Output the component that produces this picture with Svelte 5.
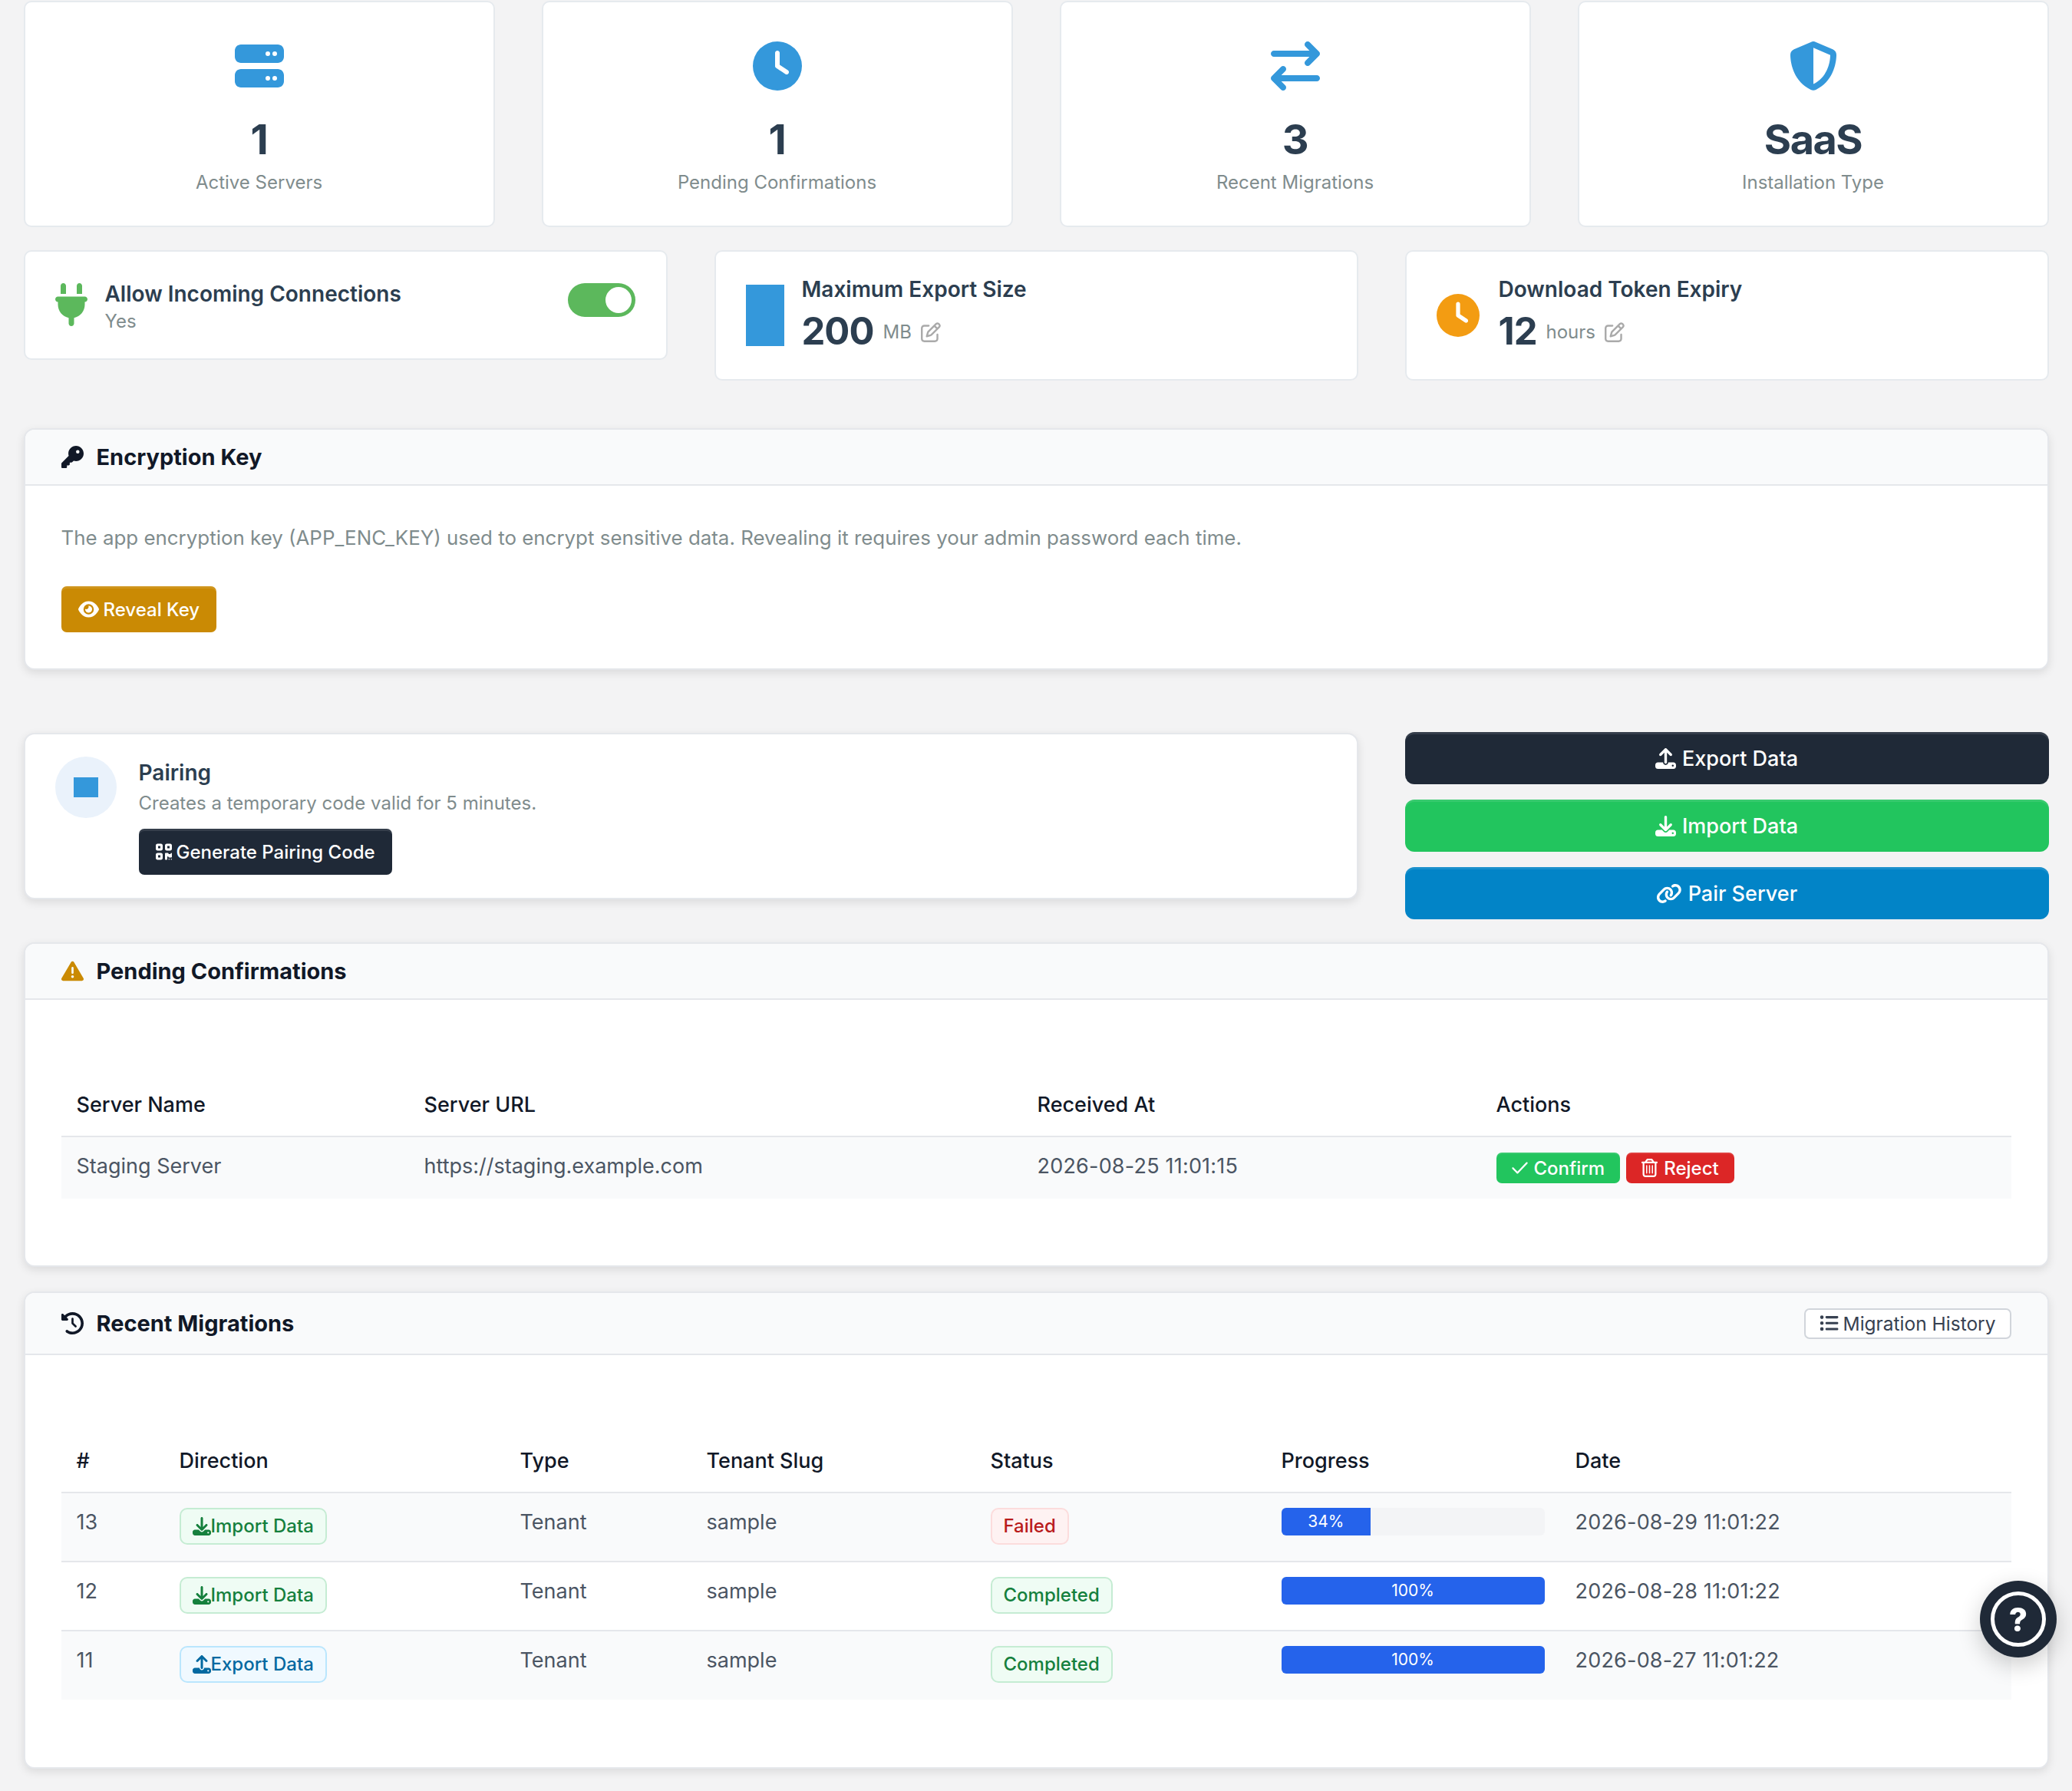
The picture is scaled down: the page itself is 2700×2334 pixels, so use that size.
<script lang="ts">
	const icons = {
		server: ['0 0 512 512', 'M64 32C28.7 32 0 60.7 0 96v64c0 35.3 28.7 64 64 64H448c35.3 0 64-28.7 64-64V96c0-35.3-28.7-64-64-64H64zm280 72a24 24 0 1 1 0 48 24 24 0 1 1 0-48zm48 24a24 24 0 1 1 48 0 24 24 0 1 1 -48 0zM64 288c-35.3 0-64 28.7-64 64v64c0 35.3 28.7 64 64 64H448c35.3 0 64-28.7 64-64V352c0-35.3-28.7-64-64-64H64zm280 72a24 24 0 1 1 0 48 24 24 0 1 1 0-48zm48 24a24 24 0 1 1 48 0 24 24 0 1 1 -48 0z'],
		clock: ['0 0 512 512', 'M256 0a256 256 0 1 1 0 512A256 256 0 1 1 256 0zM232 120V256c0 8 4 15.5 10.7 20l96 64c11 7.4 25.9 4.4 33.3-6.7s4.4-25.9-6.7-33.3L280 243.2V120c0-13.3-10.7-24-24-24s-24 10.7-24 24z'],
		exchange: ['0 0 512 512', 'M502.6 150.6c12.5-12.5 12.5-32.8 0-45.3l-96-96c-12.5-12.5-32.8-12.5-45.3 0s-12.5 32.8 0 45.3L402.7 96 32 96C14.3 96 0 110.3 0 128s14.3 32 32 32l370.7 0-41.4 41.4c-12.5 12.5-12.5 32.8 0 45.3s32.8 12.5 45.3 0l96-96zM105.4 502.6c12.5 12.5 32.8 12.5 45.3 0s12.5-32.8 0-45.3L109.3 416 480 416c17.7 0 32-14.3 32-32s-14.3-32-32-32l-370.7 0 41.4-41.4c12.5-12.5 12.5-32.8 0-45.3s-32.8-12.5-45.3 0l-96 96c-12.5 12.5-12.5 32.8 0 45.3l96 96z'],
		shield: ['0 0 512 512', 'M256 0c4.6 0 9.2 1 13.4 2.9L457.7 82.8c22 9.3 38.4 31 38.3 57.2c-.5 99.2-41.3 280.7-213.6 363.2c-16.7 8-36.1 8-52.8 0C57.3 420.7 16.5 239.2 16 140c-.1-26.2 16.3-47.9 38.3-57.2L242.7 2.9C246.8 1 251.4 0 256 0zm0 66.8V444.8C394 378 431.1 230.1 432 141.4L256 66.8l0 0z'],
		plug: ['0 0 384 512', 'M96 0C78.3 0 64 14.3 64 32v96h64V32c0-17.7-14.3-32-32-32zM288 0c-17.7 0-32 14.3-32 32v96h64V32c0-17.7-14.3-32-32-32zM32 160c-17.7 0-32 14.3-32 32s14.3 32 32 32v32c0 77.4 55 142 128 156.8V480c0 17.7 14.3 32 32 32s32-14.3 32-32V412.8C297 398 352 333.4 352 256V224c17.7 0 32-14.3 32-32s-14.3-32-32-32H32z'],
		edit: ['0 0 512 512', 'M441 58.9L453.1 71c9.4 9.4 9.4 24.6 0 33.9L424 134.1 377.9 88 407 58.9c9.4-9.4 24.6-9.4 33.9 0zM209.8 256.2L344 121.9 390.1 168 255.8 302.2c-2.9 2.9-6.5 5-10.4 6.1l-58.5 16.7 16.7-58.5c1.1-3.9 3.2-7.5 6.1-10.4zM373.1 25L175.8 222.2c-8.7 8.7-15 19.4-18.3 31.1l-28.6 100c-2.4 8.4-.1 17.4 6.1 23.6s15.2 8.5 23.6 6.1l100-28.6c11.8-3.4 22.5-9.7 31.1-18.3L487 138.9c28.1-28.1 28.1-73.7 0-101.8L474.9 25C446.8-3.1 401.2-3.1 373.1 25zM88 64C39.4 64 0 103.4 0 152V424c0 48.6 39.4 88 88 88H360c48.6 0 88-39.4 88-88V312c0-13.3-10.7-24-24-24s-24 10.7-24 24V424c0 22.1-17.9 40-40 40H88c-22.1 0-40-17.9-40-40V152c0-22.1 17.9-40 40-40H200c13.3 0 24-10.7 24-24s-10.7-24-24-24H88z'],
		key: ['0 0 512 512', 'M336 352c97.2 0 176-78.8 176-176S433.2 0 336 0S160 78.8 160 176c0 18.7 2.9 36.8 8.3 53.7L7 391c-4.5 4.5-7 10.6-7 17v80c0 13.3 10.7 24 24 24h80c13.3 0 24-10.7 24-24V448h40c13.3 0 24-10.7 24-24V384h40c6.4 0 12.5-2.5 17-7l33.3-33.3c16.9 5.4 35 8.3 53.7 8.3zM376 96a40 40 0 1 1 0 80 40 40 0 1 1 0-80z'],
		warning: ['0 0 512 512', 'M256 32c14.2 0 27.3 7.5 34.5 19.8l216 368c7.3 12.4 7.3 27.7 .2 40.1S486.3 480 472 480H40c-14.3 0-27.6-7.7-34.7-20.1s-7-27.8 .2-40.1l216-368C228.7 39.5 241.8 32 256 32zm0 128c-13.3 0-24 10.7-24 24V296c0 13.3 10.7 24 24 24s24-10.7 24-24V184c0-13.3-10.7-24-24-24zm32 224a32 32 0 1 0 -64 0 32 32 0 1 0 64 0z'],
		history: ['0 0 512 512', 'M75 75L41 41C25.9 25.9 0 36.6 0 57.9V168c0 13.3 10.7 24 24 24H134.1c21.4 0 32.1-25.9 17-41l-30.8-30.8C155 85.5 203 64 256 64c106 0 192 86 192 192s-86 192-192 192c-40.8 0-78.6-12.7-109.7-34.4c-14.5-10.1-34.4-6.6-44.6 7.9s-6.6 34.4 7.9 44.6C151.2 495 201.7 512 256 512c141.4 0 256-114.6 256-256S397.4 0 256 0C185.3 0 121.3 28.7 75 75zm181 53c-13.3 0-24 10.7-24 24V256c0 6.4 2.5 12.5 7 17l72 72c9.4 9.4 24.6 9.4 33.9 0s9.4-24.6 0-33.9l-65-65V152c0-13.3-10.7-24-24-24z'],
		eye: ['0 0 576 512', 'M288 32c-80.8 0-145.5 36.8-192.6 80.6C48.6 156 17.3 208 2.5 243.7c-3.3 7.9-3.3 16.7 0 24.6C17.3 304 48.6 356 95.4 399.4C142.5 443.2 207.2 480 288 480s145.5-36.8 192.6-80.6c46.8-43.5 78.1-95.4 93-131.1c3.3-7.9 3.3-16.7 0-24.6c-14.9-35.7-46.2-87.7-93-131.1C433.5 68.8 368.8 32 288 32zM144 256a144 144 0 1 1 288 0 144 144 0 1 1 -288 0zm144-64c0 35.3-28.7 64-64 64c-7.1 0-13.9-1.2-20.3-3.3c-5.5-1.8-11.9 1.6-11.7 7.4c.3 6.9 1.3 13.8 3.2 20.7c13.7 51.2 66.4 81.6 117.6 67.9s81.6-66.4 67.9-117.6c-11.1-41.5-47.8-69.4-88.6-71.1c-5.8-.2-9.2 6.1-7.4 11.7c2.1 6.4 3.3 13.2 3.3 20.3z'],
		qr: ['0 0 448 512', 'M0 80C0 53.5 21.5 32 48 32h96c26.5 0 48 21.5 48 48v96c0 26.5-21.5 48-48 48H48c-26.5 0-48-21.5-48-48V80zM64 96v64h64V96H64zM0 336c0-26.5 21.5-48 48-48h96c26.5 0 48 21.5 48 48v96c0 26.5-21.5 48-48 48H48c-26.5 0-48-21.5-48-48V336zm64 16v64h64V352H64zM304 32h96c26.5 0 48 21.5 48 48v96c0 26.5-21.5 48-48 48H304c-26.5 0-48-21.5-48-48V80c0-26.5 21.5-48 48-48zm80 64H320v64h64V96zM256 304c0-8.8 7.2-16 16-16h64c8.8 0 16 7.2 16 16s7.2 16 16 16h32c8.8 0 16-7.2 16-16s7.2-16 16-16s16 7.2 16 16v96c0 8.8-7.2 16-16 16H368c-8.8 0-16-7.2-16-16s-7.2-16-16-16s-16 7.2-16 16v64c0 8.8-7.2 16-16 16H272c-8.8 0-16-7.2-16-16V304zM368 480a16 16 0 1 1 0-32 16 16 0 1 1 0 32zm64 0a16 16 0 1 1 0-32 16 16 0 1 1 0 32z'],
		upload: ['0 0 512 512', 'M288 109.3V352c0 17.7-14.3 32-32 32s-32-14.3-32-32V109.3l-73.4 73.4c-12.5 12.5-32.8 12.5-45.3 0s-12.5-32.8 0-45.3l128-128c12.5-12.5 32.8-12.5 45.3 0l128 128c12.5 12.5 12.5 32.8 0 45.3s-32.8 12.5-45.3 0L288 109.3zM64 352H192c0 35.3 28.7 64 64 64s64-28.7 64-64H448c35.3 0 64 28.7 64 64v32c0 35.3-28.7 64-64 64H64c-35.3 0-64-28.7-64-64V416c0-35.3 28.7-64 64-64zM432 456a24 24 0 1 0 0-48 24 24 0 1 0 0 48z'],
		download: ['0 0 512 512', 'M288 32c0-17.7-14.3-32-32-32s-32 14.3-32 32V274.7l-73.4-73.4c-12.5-12.5-32.8-12.5-45.3 0s-12.5 32.8 0 45.3l128 128c12.5 12.5 32.8 12.5 45.3 0l128-128c12.5-12.5 12.5-32.8 0-45.3s-32.8-12.5-45.3 0L288 274.7V32zM64 352c-35.3 0-64 28.7-64 64v32c0 35.3 28.7 64 64 64H448c35.3 0 64-28.7 64-64V416c0-35.3-28.7-64-64-64H346.5l-45.3 45.3c-25 25-65.5 25-90.5 0L165.5 352H64zm368 56a24 24 0 1 1 0 48 24 24 0 1 1 0-48z'],
		link: ['0 0 640 512', 'M579.8 267.7c56.5-56.5 56.5-148 0-204.5c-50-50-128.8-56.5-186.3-15.4l-1.6 1.1c-14.4 10.3-17.7 30.3-7.4 44.6s30.3 17.7 44.6 7.4l1.6-1.1c32.1-22.9 76-19.3 103.8 8.6c31.5 31.5 31.5 82.5 0 114L422.3 334.8c-31.5 31.5-82.5 31.5-114 0c-27.9-27.9-31.5-71.8-8.6-103.8l1.1-1.6c10.3-14.4 6.9-34.4-7.4-44.6s-34.4-6.9-44.6 7.4l-1.1 1.6C206.5 251.2 213 330 263 380c56.5 56.5 148 56.5 204.5 0L579.8 267.7zM60.2 244.3c-56.5 56.5-56.5 148 0 204.5c50 50 128.8 56.5 186.3 15.4l1.6-1.1c14.4-10.3 17.7-30.3 7.4-44.6s-30.3-17.7-44.6-7.4l-1.6 1.1c-32.1 22.9-76 19.3-103.8-8.6C74 372 74 321 105.5 289.5L217.7 177.2c31.5-31.5 82.5-31.5 114 0c27.9 27.9 31.5 71.8 8.6 103.9l-1.1 1.6c-10.3 14.4-6.9 34.4 7.4 44.6s34.4 6.9 44.6-7.4l1.1-1.6C433.5 260.8 427 182 377 132c-56.5-56.5-148-56.5-204.5 0L60.2 244.3z'],
		trash: ['0 0 448 512', 'M170.5 51.6L151.5 80h145l-19-28.4c-1.5-2.2-4-3.6-6.7-3.6H177.1c-2.7 0-5.2 1.3-6.7 3.6zm147-26.6L354.2 80H368h48 8c13.3 0 24 10.7 24 24s-10.7 24-24 24h-8V432c0 44.2-35.8 80-80 80H112c-44.2 0-80-35.8-80-80V128H24c-13.3 0-24-10.7-24-24S10.7 80 24 80h8H80 93.8l36.7-55.1C140.9 9.4 158.4 0 177.1 0h93.7c18.7 0 36.2 9.4 46.6 24.9zM80 128V432c0 17.7 14.3 32 32 32H336c17.7 0 32-14.3 32-32V128H80zm80 64V400c0 8.8-7.2 16-16 16s-16-7.2-16-16V192c0-8.8 7.2-16 16-16s16 7.2 16 16zm80 0V400c0 8.8-7.2 16-16 16s-16-7.2-16-16V192c0-8.8 7.2-16 16-16s16 7.2 16 16zm80 0V400c0 8.8-7.2 16-16 16s-16-7.2-16-16V192c0-8.8 7.2-16 16-16s16 7.2 16 16z'],
		check: ['0 0 448 512', 'M434 103c9 9 9 24 0 33L174 410c-9 10-25 10-34 0L14 280c-9-9-9-24 0-33s24-9 33 0l110 112L401 103c9-9 24-9 33 0z'],
		list: ['0 0 512 512', 'M64 144a48 48 0 1 0 0-96 48 48 0 1 0 0 96zM192 64c-17.7 0-32 14.3-32 32s14.3 32 32 32H480c17.7 0 32-14.3 32-32s-14.3-32-32-32H192zm0 160c-17.7 0-32 14.3-32 32s14.3 32 32 32H480c17.7 0 32-14.3 32-32s-14.3-32-32-32H192zm0 160c-17.7 0-32 14.3-32 32s14.3 32 32 32H480c17.7 0 32-14.3 32-32s-14.3-32-32-32H192zM64 464a48 48 0 1 0 0-96 48 48 0 1 0 0 96zm48-208a48 48 0 1 0 -96 0 48 48 0 1 0 96 0z']
	};

	const stats = [
		{ icon: 'server', value: '1', label: 'Active Servers' },
		{ icon: 'clock', value: '1', label: 'Pending Confirmations' },
		{ icon: 'exchange', value: '3', label: 'Recent Migrations' },
		{ icon: 'shield', value: 'SaaS', label: 'Installation Type' }
	];

	const migrations = [
		{ id: 13, dir: 'import', status: 'Failed', progress: 34, date: '2026-08-29 11:01:22' },
		{ id: 12, dir: 'import', status: 'Completed', progress: 100, date: '2026-08-28 11:01:22' },
		{ id: 11, dir: 'export', status: 'Completed', progress: 100, date: '2026-08-27 11:01:22' }
	];
</script>

{#snippet icon(name)}
	<svg class="ico" viewBox={icons[name][0]} fill="currentColor" aria-hidden="true"><path d={icons[name][1]} /></svg>
{/snippet}

<div class="page">
	<section class="stats">
		{#each stats as stat}
			<div class="stat-card">
				<div class="stat-icon">{@render icon(stat.icon)}</div>
				<div class="stat-value">{stat.value}</div>
				<div class="stat-label">{stat.label}</div>
			</div>
		{/each}
	</section>

	<section class="settings">
		<div class="setting-card toggle-card">
			<div class="plug">{@render icon('plug')}</div>
			<div class="toggle-copy">
				<div class="setting-title">Allow Incoming Connections</div>
				<div class="setting-sub">Yes</div>
			</div>
			<div class="toggle"><span class="knob"></span></div>
		</div>
		<div class="setting-card">
			<div class="blue-block"></div>
			<div>
				<div class="setting-title">Maximum Export Size</div>
				<div class="setting-value">200 <span class="unit">MB</span><span class="edit">{@render icon('edit')}</span></div>
			</div>
		</div>
		<div class="setting-card">
			<div class="orange-clock">{@render icon('clock')}</div>
			<div>
				<div class="setting-title">Download Token Expiry</div>
				<div class="setting-value">12 <span class="unit">hours</span><span class="edit">{@render icon('edit')}</span></div>
			</div>
		</div>
	</section>

	<section class="panel key-panel">
		<header class="panel-head">
			<h2>{@render icon('key')}Encryption Key</h2>
		</header>
		<div class="key-body">
			<p>The app encryption key (APP_ENC_KEY) used to encrypt sensitive data. Revealing it requires your admin password each time.</p>
			<button class="btn amber">{@render icon('eye')}Reveal Key</button>
		</div>
	</section>

	<section class="pair-row">
		<div class="pair-card">
			<div class="pair-circle"><span class="pair-square"></span></div>
			<div>
				<div class="pair-title">Pairing</div>
				<div class="pair-sub">Creates a temporary code valid for 5 minutes.</div>
				<button class="btn dark">{@render icon('qr')}Generate Pairing Code</button>
			</div>
		</div>
		<div class="action-stack">
			<button class="wide dark">{@render icon('upload')}Export Data</button>
			<button class="wide green">{@render icon('download')}Import Data</button>
			<button class="wide blue">{@render icon('link')}Pair Server</button>
		</div>
	</section>

	<section class="panel pending-panel">
		<header class="panel-head">
			<h2><span class="warn">{@render icon('warning')}</span>Pending Confirmations</h2>
		</header>
		<div class="table-wrap">
			<table class="pending">
				<thead>
					<tr><th>Server Name</th><th>Server URL</th><th>Received At</th><th>Actions</th></tr>
				</thead>
				<tbody>
					<tr>
						<td>Staging Server</td>
						<td>https://staging.example.com</td>
						<td class="date">2026-08-25 11:01:15</td>
						<td>
							<div class="row-actions">
								<button class="mini green">{@render icon('check')}Confirm</button>
								<button class="mini red">{@render icon('trash')}Reject</button>
							</div>
						</td>
					</tr>
				</tbody>
			</table>
		</div>
	</section>

	<section class="panel recent-panel">
		<header class="panel-head">
			<h2>{@render icon('history')}Recent Migrations</h2>
			<button class="outline">{@render icon('list')}Migration History</button>
		</header>
		<div class="table-wrap">
			<table class="recent">
				<thead>
					<tr><th>#</th><th>Direction</th><th>Type</th><th>Tenant Slug</th><th>Status</th><th>Progress</th><th>Date</th></tr>
				</thead>
				<tbody>
					{#each migrations as row}
						<tr>
							<td>{row.id}</td>
							<td>
								{#if row.dir === 'import'}
									<span class="badge ok">{@render icon('download')}Import Data</span>
								{:else}
									<span class="badge info">{@render icon('upload')}Export Data</span>
								{/if}
							</td>
							<td>Tenant</td>
							<td>sample</td>
							<td><span class="badge" class:ok={row.status === 'Completed'} class:bad={row.status === 'Failed'}>{row.status}</span></td>
							<td>
								<div class="bar"><div class="fill" style="width: {row.progress}%">{row.progress}%</div></div>
							</td>
							<td class="date">{row.date}</td>
						</tr>
					{/each}
				</tbody>
			</table>
		</div>
	</section>
</div>

<button class="help" aria-label="Help"><span class="help-ring">?</span></button>

<style>
	:global(body) {
		background: #f3f3f4;
	}

	.page {
		padding: 1px 30.5px 30px;
		font-family: Inter, 'Noto Sans', sans-serif;
		font-size: 27px;
		color: #4b5563;
	}

	.ico {
		display: block;
		height: 1em;
		width: auto;
		flex: none;
	}

	button {
		font-family: inherit;
		border: 0;
		color: #fff;
	}

	.stats {
		display: grid;
		grid-template-columns: repeat(4, 1fr);
		gap: 61px;
	}

	.stat-card {
		background: #fff;
		border: 2px solid #e6eaee;
		border-radius: 10px;
		padding: 51px 30px 38px;
		text-align: center;
	}

	.stat-icon {
		display: flex;
		justify-content: center;
		font-size: 64px;
		color: #3498db;
	}

	.stat-value {
		margin-top: 32px;
		font-size: 54px;
		font-weight: 700;
		line-height: 63px;
		letter-spacing: -1.5px;
		color: #2c3e50;
	}

	.stat-label {
		margin-top: 6px;
		font-size: 24px;
		line-height: 37px;
		color: #7f8c8d;
	}

	.settings {
		display: grid;
		grid-template-columns: repeat(3, 1fr);
		align-items: start;
		gap: 61px;
		margin-top: 30px;
	}

	.setting-card {
		display: flex;
		align-items: center;
		gap: 23px;
		height: 170px;
		box-sizing: border-box;
		padding: 0 39px;
		background: #fff;
		border: 2px solid #e6eaee;
		border-radius: 10px;
	}

	.toggle-card {
		align-items: flex-start;
		height: 143px;
		padding: 41px 40px 0 39px;
	}

	.plug {
		font-size: 56px;
		color: #5cb85c;
	}

	.toggle-copy {
		flex: 1;
	}

	.setting-title {
		font-size: 28px;
		font-weight: 600;
		line-height: 34px;
		color: #2c3e50;
	}

	.toggle-copy .setting-title {
		margin-top: -3px;
	}

	.setting-sub {
		margin-top: 4px;
		font-size: 24px;
		line-height: 30px;
		color: #7f8c8d;
	}

	.toggle {
		display: flex;
		justify-content: flex-end;
		align-items: center;
		width: 88px;
		height: 44px;
		box-sizing: border-box;
		padding: 0 5px;
		border-radius: 22px;
		background: #5cb85c;
	}

	.knob {
		width: 34px;
		height: 34px;
		border-radius: 50%;
		background: #fff;
	}

	.blue-block {
		width: 50px;
		height: 80px;
		background: #3498db;
	}

	.orange-clock {
		margin-right: 2px;
		font-size: 56px;
		color: #f39c12;
	}

	.setting-value {
		display: flex;
		align-items: center;
		margin-top: 6px;
		font-size: 49px;
		font-weight: 700;
		line-height: 59px;
		letter-spacing: -1px;
		color: #2c3e50;
	}

	.unit {
		margin-left: 12px;
		padding-top: 3px;
		font-size: 24px;
		font-weight: 400;
		letter-spacing: 0;
		color: #7f8c8d;
	}

	.edit {
		margin-left: 12px;
		padding-top: 3px;
		font-size: 26px;
		color: #aaa;
	}

	.panel {
		background: #fff;
		border: 2px solid #e5e7eb;
		border-radius: 14px;
		box-shadow: 0 4px 12px rgba(0, 0, 0, 0.1);
		overflow: hidden;
	}

	.key-panel {
		margin-top: 62px;
	}

	.panel-head {
		display: flex;
		align-items: center;
		justify-content: space-between;
		padding: 0 47px;
		height: 71px;
		background: #f9fafb;
		border-bottom: 2px solid #e5e7eb;
	}

	.recent-panel .panel-head {
		height: 79px;
	}

	h2 {
		display: flex;
		align-items: center;
		gap: 17px;
		margin: 0;
		font-size: 29px;
		font-weight: 700;
		color: #111827;
	}

	.warn {
		color: #ca8a04;
	}

	.key-body {
		padding: 48px 47px 47px;
	}

	.key-body p {
		margin: 0 0 43px;
		font-size: 25.9px;
		line-height: 40px;
		color: #7f8c8d;
	}

	.btn {
		display: inline-flex;
		align-items: center;
		gap: 6px;
		height: 60px;
		padding: 0 22px;
		border-radius: 7px;
		font-size: 24px;
		font-weight: 500;
		box-shadow: inset 0 3px 0 rgba(255, 255, 255, 0.1);
	}

	.amber {
		background: #ca8a04;
	}

	.dark {
		background: #1f2937;
	}

	.green {
		background: #22c55e;
	}

	.blue {
		background: #0284c7;
	}

	.red {
		background: #dc2626;
	}

	.pair-row {
		display: grid;
		grid-template-columns: repeat(3, 1fr);
		align-items: start;
		gap: 61px;
		margin-top: 81px;
	}

	.pair-card {
		grid-column: span 2;
		display: flex;
		gap: 29px;
		margin-top: 1px;
		padding: 29px 39px 30px;
		background: #fff;
		border: 2px solid #e5e7eb;
		border-radius: 14px;
		box-shadow: 0 4px 12px rgba(0, 0, 0, 0.1);
	}

	.pair-circle {
		display: flex;
		align-items: center;
		justify-content: center;
		width: 80px;
		height: 80px;
		flex: none;
		border-radius: 50%;
		background: #eaf2fb;
	}

	.pair-square {
		width: 32px;
		height: 26px;
		background: #3498db;
	}

	.pair-title {
		font-size: 28px;
		font-weight: 600;
		line-height: 42px;
		color: #2c3e50;
	}

	.pair-sub {
		margin-bottom: 15px;
		font-size: 24px;
		line-height: 37px;
		color: #7f8c8d;
	}

	.action-stack {
		display: flex;
		flex-direction: column;
		gap: 20px;
	}

	.wide {
		display: flex;
		align-items: center;
		justify-content: center;
		gap: 8px;
		height: 68px;
		border-radius: 12px;
		font-size: 27px;
		font-weight: 500;
		box-shadow: inset 0 3px 0 rgba(255, 255, 255, 0.1);
	}

	.pending-panel {
		margin-top: 30px;
	}

	.recent-panel {
		margin-top: 32px;
	}

	.table-wrap {
		padding: 96px 47px 87px;
	}

	.recent-panel .table-wrap {
		padding: 97px 47px 88px;
	}

	table {
		width: 100%;
		table-layout: fixed;
		border-collapse: collapse;
	}

	th {
		box-sizing: border-box;
		padding: 20px 20px 19px;
		text-align: left;
		font-size: 27px;
		font-weight: 500;
		line-height: 42px;
		color: #111827;
		border-bottom: 2px solid #e5e7eb;
	}

	td {
		box-sizing: border-box;
		padding: 17px 20px 20px;
		font-size: 27px;
		line-height: 42px;
		vertical-align: top;
		border-top: 2px solid #e5e7eb;
	}

	.date {
		letter-spacing: 0.2px;
	}

	.recent td {
		height: 90px;
		padding-bottom: 0;
	}

	tbody tr:first-child td {
		border-top: 0;
	}

	tbody tr:nth-child(odd) {
		background: #f9fafb;
	}

	.pending th:nth-child(1) { width: 453px; }
	.pending th:nth-child(2) { width: 799px; }
	.pending th:nth-child(3) { width: 598px; }

	.recent th:nth-child(1) { width: 134px; }
	.recent th:nth-child(2) { width: 444px; }
	.recent th:nth-child(3) { width: 243px; }
	.recent th:nth-child(4) { width: 370px; }
	.recent th:nth-child(5) { width: 379px; }
	.recent th:nth-child(6) { width: 383px; }

	.row-actions {
		display: flex;
		gap: 8px;
		margin-top: 3px;
	}

	.mini {
		display: inline-flex;
		align-items: center;
		gap: 8px;
		height: 40px;
		padding: 0 20px;
		border-radius: 7px;
		font-size: 24px;
		font-weight: 500;
		box-shadow: inset 0 2px 0 rgba(255, 255, 255, 0.1);
	}

	.outline {
		display: inline-flex;
		align-items: center;
		gap: 6px;
		height: 40px;
		padding: 0 18px;
		background: #fff;
		border: 2px solid #d1d5db;
		border-radius: 7px;
		font-size: 24.5px;
		color: #374151;
	}

	.badge {
		display: inline-flex;
		align-items: center;
		height: 48px;
		box-sizing: border-box;
		margin-top: 2px;
		padding: 0 15px;
		border: 2px solid transparent;
		border-radius: 10px;
		font-size: 24px;
		font-weight: 500;
	}

	.ok {
		background: #effcf4;
		border-color: #c5ecd3;
		color: #15803d;
	}

	.bad {
		background: #fef2f2;
		border-color: #fcdcdc;
		color: #b91c1c;
	}

	.info {
		background: #f0f9ff;
		border-color: #bae6fd;
		color: #0369a1;
	}

	.bar {
		height: 36px;
		margin-top: 2px;
		border-radius: 6px;
		background: #f3f4f6;
		overflow: hidden;
	}

	.fill {
		height: 100%;
		background: #2563eb;
		color: #fff;
		font-size: 21px;
		line-height: 36px;
		text-align: center;
	}

	.help {
		position: fixed;
		left: 2580px;
		top: 2060px;
		display: flex;
		align-items: center;
		justify-content: center;
		width: 100px;
		height: 100px;
		padding: 0;
		border-radius: 50%;
		background: #1f2937;
		box-shadow: 0 10px 30px rgba(0, 0, 0, 0.2);
	}

	.help-ring {
		display: flex;
		align-items: center;
		justify-content: center;
		width: 72px;
		height: 72px;
		box-sizing: border-box;
		border: 5px solid #fff;
		border-radius: 50%;
		font-family: Inter, sans-serif;
		font-size: 42px;
		font-weight: 800;
		color: #fff;
	}
</style>
